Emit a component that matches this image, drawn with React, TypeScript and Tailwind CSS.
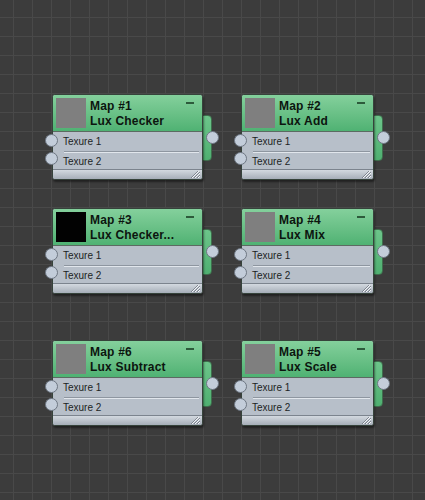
type MapNode = {
  id: number
  name: string
  left: number
  top: number
  width: number
  swatch: string
}

const nodes: MapNode[] = [
  { id: 1, name: "Lux Checker", left: 52, top: 94, width: 151, swatch: "bg-[#7f7f7f]" },
  { id: 2, name: "Lux Add", left: 241, top: 94, width: 133, swatch: "bg-[#7f7f7f]" },
  { id: 3, name: "Lux Checker...", left: 52, top: 208, width: 151, swatch: "bg-[#020202]" },
  { id: 4, name: "Lux Mix", left: 241, top: 208, width: 133, swatch: "bg-[#7f7f7f]" },
  { id: 6, name: "Lux Subtract", left: 52, top: 340, width: 151, swatch: "bg-[#7f7f7f]" },
  { id: 5, name: "Lux Scale", left: 241, top: 340, width: 133, swatch: "bg-[#7f7f7f]" },
]

function Port({ className }: { className: string }) {
  return (
    <div
      className={`absolute h-[13px] w-[13px] rounded-full border border-[#6d7682] bg-[#c3cdda] ${className}`}
    />
  )
}

function Node({ node }: { node: MapNode }) {
  return (
    <div
      className="absolute h-[86px]"
      style={{ left: node.left, top: node.top, width: node.width }}
    >
      {/* output tab on the right edge */}
      <div className="absolute right-[-9px] top-[21px] h-[46px] w-[12px] rounded-r-[4px] border border-[#3f6e4d] bg-gradient-to-b from-[#6cc58a] to-[#4fb071]" />

      <div className="relative flex h-full flex-col overflow-hidden rounded-[3px] border border-[#36433b] bg-[#b7bfc9] shadow-[1px_2px_2px_rgba(0,0,0,0.45)]">
        {/* header */}
        <div className="relative flex h-[36px] shrink-0 items-start gap-[4px] bg-gradient-to-b from-[#84d09c] to-[#4fb273] pl-[3px] pt-[3px]">
          <div className={`h-[30px] w-[30px] shrink-0 ${node.swatch}`} />
          <div className="flex flex-col pt-[1px] font-['Liberation_Sans',Arial,sans-serif] text-[12px] leading-[15px] font-bold tracking-[0.2px] text-[#0c150f]">
            <span>Map #{node.id}</span>
            <span className="whitespace-nowrap">{node.name}</span>
          </div>
          <div className="absolute right-[8px] top-[7px] h-[2px] w-[8px] bg-[#2d5a3b]" />
        </div>
        <div className="h-px shrink-0 bg-[#5c6a62]" />

        {/* inputs */}
        <div className="flex h-[19px] shrink-0 items-center pl-[10px] font-['Liberation_Sans',Arial,sans-serif] text-[10px] text-[#1c1f24]">
          Texure 1
        </div>
        <div className="ml-[11px] mr-[3px] h-[2px] shrink-0 border-t border-[#8e96a0] bg-[#e1e6ec]" />
        <div className="flex h-[16px] shrink-0 items-center pl-[10px] font-['Liberation_Sans',Arial,sans-serif] text-[10px] text-[#1c1f24]">
          Texure 2
        </div>

        {/* footer strip with resize grip */}
        <div className="h-px shrink-0 bg-[#7c848e]" />
        <div className="relative flex-1 bg-gradient-to-b from-[#d3d9e0] to-[#a6aeb8]">
          <svg className="absolute bottom-[1px] right-[2px]" width="10" height="7" viewBox="0 0 10 7">
            <path d="M2 7L9 0M5 7L10 2M8 7L10 5" stroke="#f2f4f7" strokeWidth="1" />
            <path d="M1 7L8 0M4 7L10 1M7 7L10 4" stroke="#6e7580" strokeWidth="0.8" />
          </svg>
        </div>
      </div>

      <Port className="left-[-7px] top-[40px]" />
      <Port className="left-[-7px] top-[58px]" />
      <Port className="right-[-16px] top-[37px]" />
    </div>
  )
}

export default function App() {
  return (
    <div className="relative h-[500px] w-full overflow-hidden bg-[#3c3c3c] bg-[linear-gradient(to_right,#494949_1px,transparent_1px),linear-gradient(to_bottom,#494949_1px,transparent_1px)] bg-[size:19px_19px] bg-[position:13px_17px]">
      {nodes.map((n) => (
        <Node key={n.id} node={n} />
      ))}
    </div>
  )
}
